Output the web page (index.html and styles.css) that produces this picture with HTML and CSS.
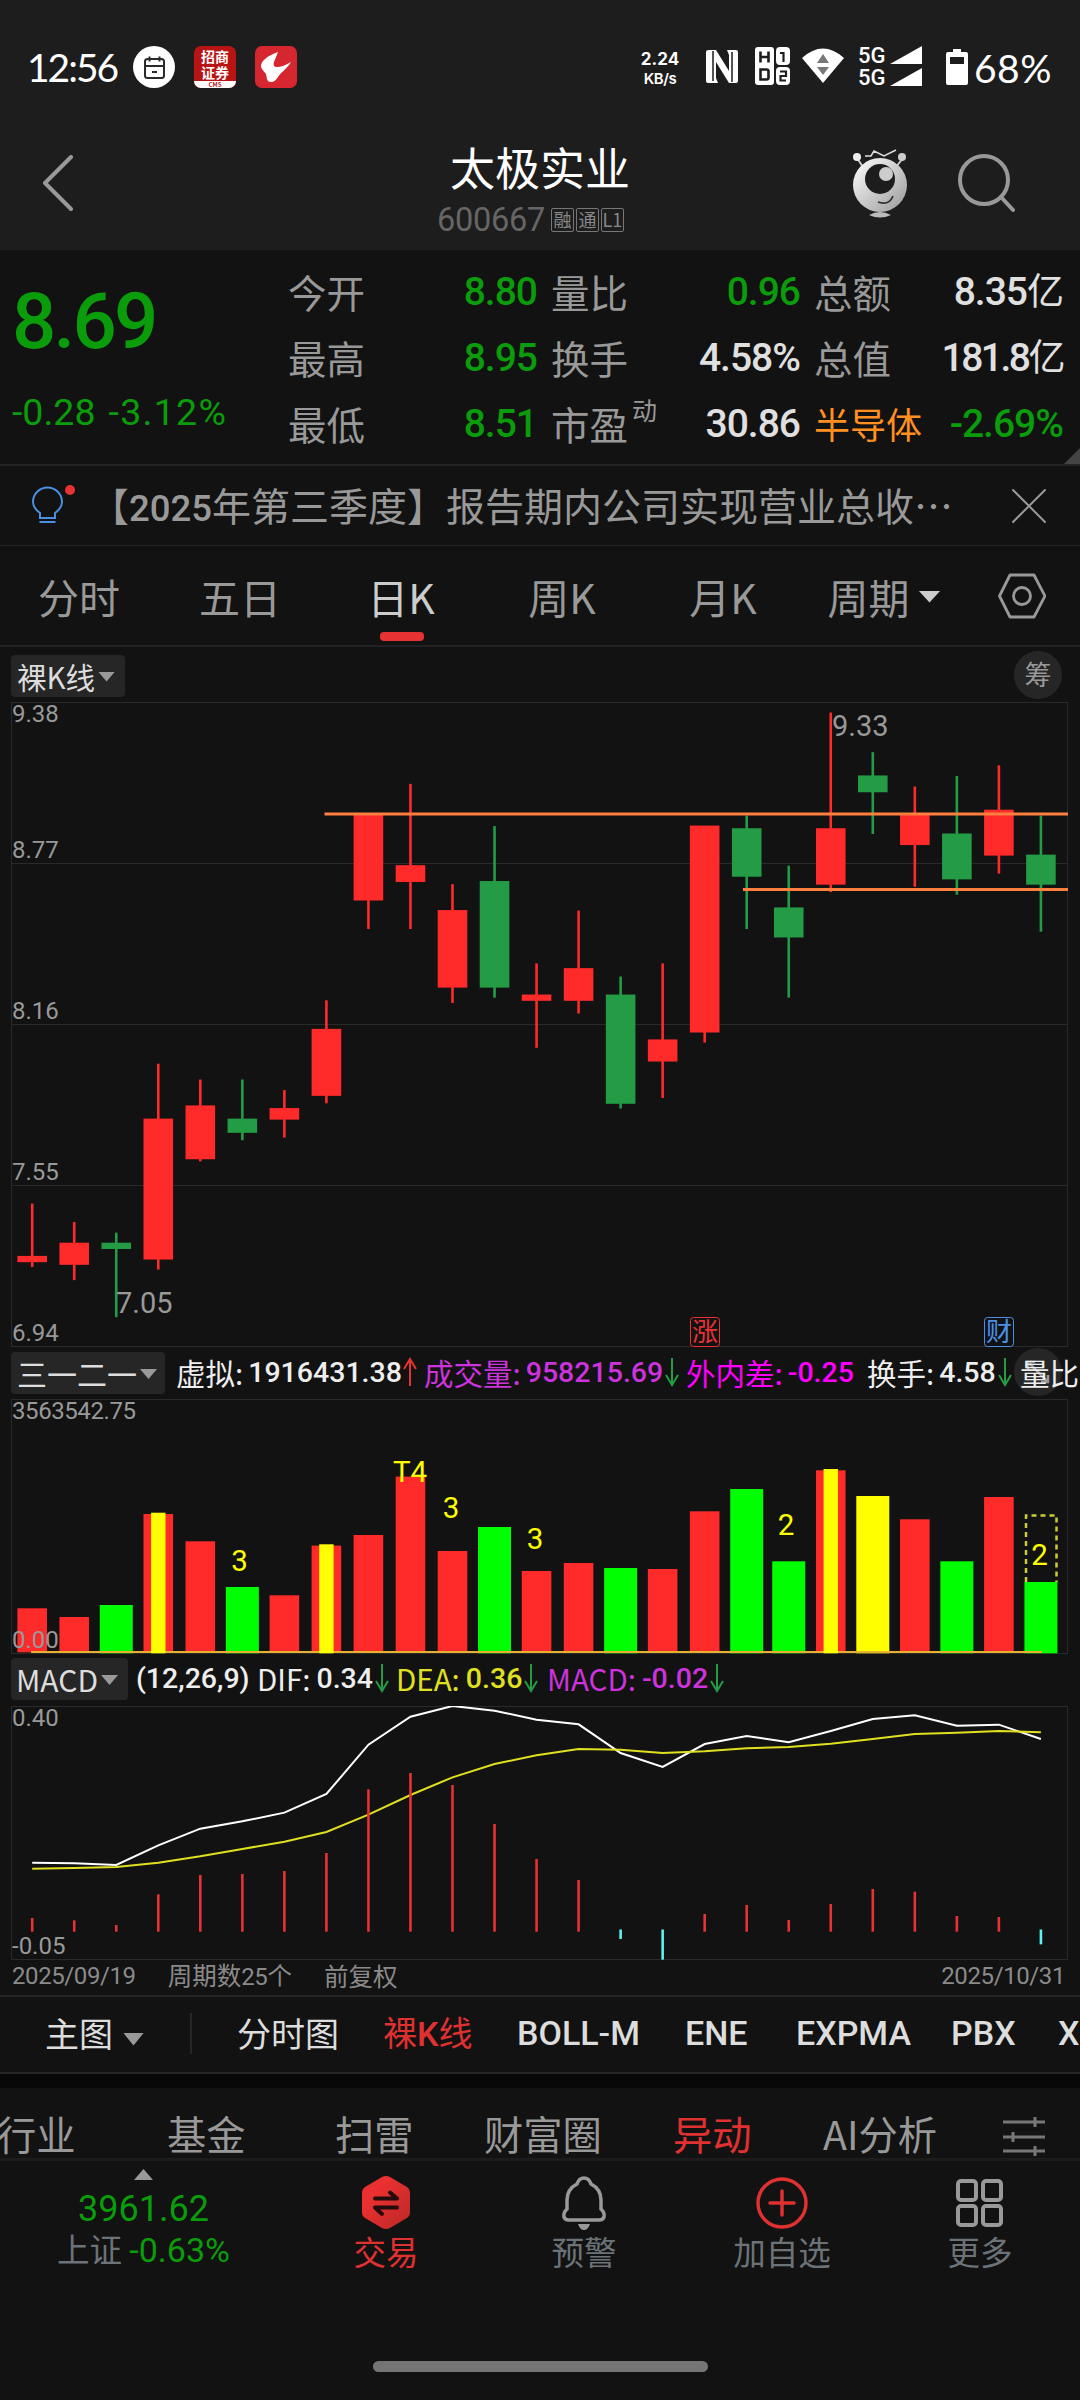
FILE: index.html
```html
<!DOCTYPE html>
<html lang="zh-CN">
<head>
    <meta charset="UTF-8">
    <meta name="viewport" content="width=device-width, initial-scale=1.0">
    <title>太极实业 600667</title>
    <link rel="stylesheet" href="styles.css">
</head>
<body>
    <!-- Status bar -->
    <div class="status-bar">
        <span class="clock">12:56</span>
        <svg class="app-icon" width="42" height="42" viewBox="0 0 42 42">
            <circle cx="21" cy="21" r="21" fill="#fff"/>
            <g fill="none" stroke="#2a2a2a" stroke-width="2">
                <rect x="12" y="13" width="19" height="19" rx="2.5"/>
                <path d="M12 20h19M16.500 10.500v5M26.500 10.500v5M19 26h5"/>
            </g>
        </svg>
        <div class="app-icon cms-icon">
            <div class="cms-text">招商<br>证券</div>
            <div class="cms-foot">CMS</div>
        </div>
        <svg class="app-icon" width="42" height="42" viewBox="0 0 42 42">
            <rect width="42" height="42" rx="7" fill="#d6262f"/>
            <path d="M23 6C12 10 6 15 6 20c0 3 3 5 5 8 1 5 1 8 5 8 3 0 5-2 7-5 3-5 9-8 13-15-5 3-10 5-14 5-3 0-4-2-3-5z" fill="#fff"/>
        </svg>
        <div class="net-speed">
            <span>2.24</span>
            <span>KB/s</span>
        </div>
        <svg class="status-icons" width="218" height="42" viewBox="0 0 218 42">
            <!-- nfc -->
            <path d="M3 4h7l13 21V9l-2-5h9q2 0 2 2v29q0 2-2 2h-7L10 16v16l2 5H3q-3 0-3-2V6q0-2 3-2z" fill="#fff"/>
            <path d="M7 5v30M26 6v30" stroke="#1d1d1d" stroke-width="1.5"/>
            <!-- hd 1/2 -->
            <g transform="translate(49 1)">
                <rect width="19" height="38" rx="3" fill="#fff"/>
                <path d="M5.500 4.500v11M13.500 4.500v11M5.500 10h8M5.500 22.500h6q2 0 2 2v6q0 2-2 2h-6z" fill="none" stroke="#1d1d1d" stroke-width="2.600"/>
                <rect x="21" width="14" height="18" rx="4" fill="#fff"/>
                <rect x="21" y="20" width="14" height="18" rx="4" fill="#fff"/>
                <path d="M25 6h3.500v9M25 24.500h6v4.500h-5.500v4.500H31" fill="none" stroke="#1d1d1d" stroke-width="2.200"/>
            </g>
            <!-- wifi -->
            <path d="M96 12Q117-7 138 12L117 37z" fill="#fff"/>
            <path d="M117 8l6 9h-12zM111 21h12l-6 8z" fill="#777"/>
            <text x="152" y="17" class="net-type">5G</text>
            <text x="152" y="39" class="net-type">5G</text>
            <path d="M216 0v18h-32zM216 22v18h-32z" fill="#fff"/>
        </svg>
        <svg class="battery-icon" width="22" height="36" viewBox="0 0 22 36">
            <path d="M7 0h8v3h5q2 0 2 2v29q0 2-2 2H2q-2 0-2-2V5q0-2 2-2h5z" fill="#fff"/>
            <rect x="4" y="8" width="14" height="7" fill="#1d1d1d"/>
        </svg>
        <span class="battery">68%</span>
    </div>

    <!-- Title bar -->
    <div class="title-bar">
        <svg class="back" width="32" height="56" viewBox="0 0 32 56">
            <path d="M29 2L3 28l26 26" fill="none" stroke="#999" stroke-width="4" stroke-linecap="round" stroke-linejoin="round"/>
        </svg>
        <div class="title">
            <div class="name">太极实业</div>
            <div class="code"><span class="num">600667</span><i>融</i><i>通</i><i>L1</i></div>
        </div>
        <svg class="robot" width="56" height="70" viewBox="0 0 56 70">
            <defs>
                <linearGradient id="silver" x1="0" y1="0" x2="1" y2="1">
                    <stop offset="0" stop-color="#fff"/>
                    <stop offset="1" stop-color="#999"/>
                </linearGradient>
            </defs>
            <path d="M5 9l6 9M51 9l-7 9" stroke="#ccc" stroke-width="2"/>
            <circle cx="5" cy="8" r="4" fill="#eee"/>
            <circle cx="50" cy="8" r="4" fill="#ccc"/>
            <path d="M13 7h6l3-5 10 5 12-6" fill="none" stroke="#ddd" stroke-width="1.500"/>
            <circle cx="28" cy="36" r="27" fill="url(#silver)"/>
            <circle cx="28" cy="30" r="15" fill="#1d1d1d"/>
            <circle cx="34" cy="25" r="7" fill="#ccc"/>
            <path d="M26 53q11 4 15-6" fill="none" stroke="#333" stroke-width="1.800"/>
            <path d="M17 66q11-6 22 0-11 5-22 0z" fill="#bbb"/>
        </svg>
        <svg class="search" width="58" height="60" viewBox="0 0 58 60">
            <circle cx="27" cy="27" r="24" fill="none" stroke="#999" stroke-width="4"/>
            <path d="M44 44l12 13" stroke="#999" stroke-width="4" stroke-linecap="round"/>
        </svg>
    </div>

    <!-- Quote -->
    <div class="quote">
        <div class="last num">
            <div class="price">8.69</div>
            <div class="change"><span>-0.28</span><span>-3.12%</span></div>
        </div>
        <div class="stats">
            <div class="stat"><span>今开</span><b class="down">8.80</b></div>
            <div class="stat"><span>量比</span><b class="down">0.96</b></div>
            <div class="stat"><span>总额</span><b>8.35<em>亿</em></b></div>
            <div class="stat"><span>最高</span><b class="down">8.95</b></div>
            <div class="stat"><span>换手</span><b>4.58%</b></div>
            <div class="stat"><span>总值</span><b class="long">181.8<em>亿</em></b></div>
            <div class="stat"><span>最低</span><b class="down">8.51</b></div>
            <div class="stat"><span>市盈<sup>动</sup></span><b>30.86</b></div>
            <div class="stat"><span class="sector">半导体</span><b class="down">-2.69%</b></div>
        </div>
        <div class="corner"></div>
    </div>

    <!-- Notice -->
    <div class="notice">
        <svg class="bulb" width="44" height="42" viewBox="0 0 44 42">
            <path d="M8 33v-5Q1 23 1 17a14.500 14.500 0 0 1 29 0q0 6-7 11v5zM7.500 37h16" fill="none" stroke="#4a90e2" stroke-width="2"/>
            <circle cx="38" cy="5" r="5" fill="#e63232"/>
        </svg>
        <span class="notice-text">【<span class="num">2025</span>年第三季度】报告期内公司实现营业总收<span class="dots">⋯</span></span>
        <svg class="close" width="36" height="36" viewBox="0 0 36 36">
            <path d="M2 2l32 32M34 2L2 34" stroke="#999" stroke-width="2" stroke-linecap="round"/>
        </svg>
    </div>

    <!-- Period tabs -->
    <div class="tabs">
        <span>分时</span>
        <span>五日</span>
        <span class="active">日K</span>
        <span>周K</span>
        <span>月K</span>
        <span>周期<i class="tri light"></i></span>
        <svg width="48" height="46" viewBox="0 0 48 46">
            <path d="M12 2h24l11 21-11 21H12L1.500 23z" fill="none" stroke="#999" stroke-width="2.800" stroke-linejoin="round"/>
            <circle cx="24" cy="23" r="8.500" fill="none" stroke="#999" stroke-width="2.800"/>
        </svg>
    </div>

    <!-- K line -->
    <div class="chart-head k-head">
        <span class="picker">裸K线<i class="tri"></i></span>
        <span class="round">筹</span>
    </div>
    <svg id="kline" class="chart" width="1080" height="645" viewBox="0 702 1080 645"></svg>

    <!-- Volume -->
    <div class="chart-head vol-head">
        <span class="picker">三一二一<i class="tri"></i></span>
        <div class="vol-values">
            <span>虚拟:<b>1916431.38</b><svg class="arrow up" width="14" height="30" viewBox="0 0 14 30"><path d="M7 29V2M1 12l6-10 6 10"/></svg></span>
            <span class="purple">成交量:<b>958215.69</b><svg class="arrow" width="14" height="30" viewBox="0 0 14 30"><path d="M7 1v27M1 18l6 10 6-10"/></svg></span>
            <span class="magenta">外内差:<b>-0.25</b></span>
            <span>换手:<b>4.58</b><svg class="arrow" width="14" height="30" viewBox="0 0 14 30"><path d="M7 1v27M1 18l6 10 6-10"/></svg></span>
            <span>量比</span>
        </div>
        <span class="round expand">
            <svg width="26" height="26" viewBox="0 0 26 26"><path d="M3 3l20 20M3 10V3h7M23 16v7h-7" fill="none" stroke="#999" stroke-width="2.500"/></svg>
        </span>
    </div>
    <svg id="volume" class="chart" width="1080" height="256" viewBox="0 1399 1080 256"></svg>

    <!-- MACD -->
    <div class="chart-head macd-head">
        <span class="picker">MACD<i class="tri"></i></span>
        <div class="macd-values">
            <b>(12,26,9)</b>
            <span>DIF:<b>0.34</b><svg class="arrow" width="14" height="30" viewBox="0 0 14 30"><path d="M7 1v27M1 18l6 10 6-10"/></svg></span>
            <span class="yellow">DEA:<b>0.36</b><svg class="arrow" width="14" height="30" viewBox="0 0 14 30"><path d="M7 1v27M1 18l6 10 6-10"/></svg></span>
            <span class="purple">MACD:<b>-0.02</b><svg class="arrow" width="14" height="30" viewBox="0 0 14 30"><path d="M7 1v27M1 18l6 10 6-10"/></svg></span>
        </div>
    </div>
    <svg id="macd" class="chart" width="1080" height="255" viewBox="0 1706 1080 255"></svg>
    <div class="date-row">
        <span class="num">2025/09/19</span>
        <span>周期数<span class="num">25</span>个</span>
        <span>前复权</span>
        <span class="num">2025/10/31</span>
    </div>

    <!-- Main chart indicators -->
    <div class="indicators">
        <span class="main-pick">主图<i class="tri"></i></span>
        <span>分时图</span>
        <span class="active">裸<b>K</b>线</span>
        <b>BOLL-M</b>
        <b>ENE</b>
        <b>EXPMA</b>
        <b>PBX</b>
        <b>XS</b>
    </div>

    <div class="sections">
        <span>行业</span>
        <span>基金</span>
        <span>扫雷</span>
        <span>财富圈</span>
        <span class="active">异动</span>
        <span>AI分析</span>
        <svg width="44" height="40" viewBox="0 0 44 40">
            <path d="M1 5h42M1 20h42M1 34h42M33 0v10M11 15v10M33 29v10" stroke="#777" stroke-width="3" fill="none"/>
        </svg>
    </div>

    <!-- Bottom bar -->
    <div class="bottom-bar">
        <div class="index">
            <i class="tri-up"></i>
            <div class="index-value num">3961.62</div>
            <div class="index-name">上证 <span class="num">-0.63%</span></div>
        </div>
        <div class="item active">
            <svg width="52" height="54" viewBox="0 0 52 54">
                <defs>
                    <linearGradient id="trade" x1="0" y1="0" x2="1" y2="1">
                        <stop offset="0.3" stop-color="#ea3030"/>
                        <stop offset="1" stop-color="#b92828"/>
                    </linearGradient>
                </defs>
                <path d="M26 0q2 0 4 1l17 10q3 2 3 5v21q0 3-3 5L30 52q-4 2-8 0L5 42q-3-2-3-5V16q0-3 3-5L22 1q2-1 4-1z" fill="url(#trade)"/>
                <path d="M15 22.500h22l-7-6M37 31.500H15l7 6.500" fill="none" stroke="#250c0c" stroke-width="4" stroke-linecap="round" stroke-linejoin="round"/>
            </svg>
            <span>交易</span>
        </div>
        <div class="item">
            <svg width="52" height="54" viewBox="0 0 52 54">
                <path d="M26 2c-4 0-6 3-7 6-6 3-10 9-10 16v9c-5 5-4 11 2 11h30c6 0 7-6 2-11v-9c0-7-4-13-10-16-1-3-3-6-7-6z" fill="none" stroke="#999" stroke-width="3.500"/>
                <path d="M20 48h12q-2 6-6 6t-6-6z" fill="#999"/>
            </svg>
            <span>预警</span>
        </div>
        <div class="item">
            <svg width="52" height="54" viewBox="0 0 52 54">
                <circle cx="26" cy="27" r="24" fill="none" stroke="#e03131" stroke-width="3.500"/>
                <path d="M26 15v24M14 27h24" stroke="#e03131" stroke-width="3.500" stroke-linecap="round"/>
            </svg>
            <span>加自选</span>
        </div>
        <div class="item">
            <svg width="52" height="54" viewBox="0 0 52 54">
                <g fill="none" stroke="#999" stroke-width="4">
                    <rect x="4" y="5" width="18" height="19" rx="3"/>
                    <rect x="29" y="5" width="18" height="19" rx="3"/>
                    <rect x="4" y="30" width="18" height="19" rx="3"/>
                    <rect x="29" y="30" width="18" height="19" rx="3"/>
                </g>
            </svg>
            <span>更多</span>
        </div>
    </div>
    <div class="home-bar"></div>

    <script src="script.js"></script>
</body>
</html>
```
FILE: styles.css
```css
* {
    box-sizing: border-box;
}

body {
    margin: 0;
    width: 1080px;
    height: 2400px;
    overflow: hidden;
    background-color: #121212;
    color: #999;
    font-family: "Noto Sans CJK SC", sans-serif;
    font-weight: 400;
}

svg {
    display: block;
    flex-shrink: 0;
}

i, em {
    font-style: normal;
}

b {
    font-weight: 500;
}

.num, b {
    font-family: Roboto, "Noto Sans CJK SC", sans-serif;
}

.down {
    color: #0a9c0a;
}

/* Status bar */
.status-bar {
    display: flex;
    align-items: center;
    height: 134px;
    padding-left: 27px;
    background-color: #1d1d1d;
    color: #fff;
}

.clock, .battery {
    font-family: Lato, sans-serif;
    font-size: 39px;
    letter-spacing: -2px;
}

.clock {
    width: 106px;
}

.battery {
    margin-left: 6px;
    margin-top: 2px;
    letter-spacing: 0.500px;
}

.battery-icon {
    margin-left: 22px;
}

.app-icon {
    margin-right: 19px;
    flex-shrink: 0;
}

.cms-icon {
    width: 42px;
    height: 42px;
    border-radius: 7px;
    overflow: hidden;
    background-color: #b81414;
    text-align: center;
}

.cms-text {
    height: 35px;
    padding-top: 2px;
    font-size: 14px;
    line-height: 16px;
    font-weight: 700;
}

.cms-foot {
    height: 7px;
    background-color: #fff;
    color: #b81414;
    font-size: 6px;
    line-height: 7px;
    font-weight: 700;
}

.net-speed {
    display: flex;
    flex-direction: column;
    align-items: center;
    width: 48px;
    margin-left: 320px;
    margin-right: 22px;
    margin-top: 4px;
    font-family: Inter, sans-serif;
    font-size: 17px;
    line-height: 20px;
    font-weight: 700;
}

.net-speed span + span {
    font-size: 15px;
    font-weight: 600;
    letter-spacing: -0.500px;
}

.net-type {
    font-family: Roboto, sans-serif;
    font-size: 22px;
    font-weight: 500;
    fill: #fff;
}

/* Title bar */
.title-bar {
    display: flex;
    align-items: center;
    height: 116px;
    padding-left: 42px;
    background-color: #1d1d1d;
}

.back {
    margin-top: -19px;
}

.title {
    width: 370px;
    margin-left: 281px;
    text-align: center;
}

.name {
    margin-top: -1px;
    color: #fff;
    font-size: 45px;
    line-height: 54px;
}

.code {
    display: flex;
    align-items: center;
    justify-content: center;
    gap: 2px;
    height: 46px;
    margin-top: 3px;
    margin-right: 19px;
    color: #666;
    font-size: 32.500px;
}

.code .num {
    margin-right: 4px;
    letter-spacing: -0.300px;
}

.code i {
    width: 23px;
    height: 24px;
    border: 1px solid #777;
    border-radius: 2px;
    color: #888;
    font-size: 18px;
    line-height: 21px;
    text-align: center;
}

.robot {
    margin: -17px 0 0 127px;
}

.search {
    margin: -19px 0 0 49px;
}

/* Quote */
.quote {
    position: relative;
    display: flex;
    height: 216px;
    border-bottom: 2px solid #222;
}

.last {
    width: 288px;
    padding-left: 12px;
    color: #0a9c0a;
    font-weight: 500;
}

.price {
    height: 134px;
    padding-top: 25px;
    font-size: 78px;
    line-height: 94px;
    letter-spacing: -2.800px;
}

.change {
    display: flex;
    gap: 13px;
    font-size: 37.500px;
    line-height: 56px;
    font-weight: 400;
}

.change span + span {
    letter-spacing: 1.300px;
}

.stats {
    display: grid;
    grid-template-columns: repeat(3, 247px);
    grid-auto-rows: 66px;
    column-gap: 16px;
    padding-top: 9px;
}

.stat {
    display: flex;
    align-items: center;
    justify-content: space-between;
    font-size: 38.500px;
    line-height: 61px;
    white-space: nowrap;
}

.stat > span {
    margin-top: -2px;
}

.stat b {
    color: #e0e0e0;
    font-size: 39px;
    line-height: 66px;
    letter-spacing: -1px;
    margin-right: -2px;
}

.stat b.down {
    color: #0a9c0a;
}

.stat em {
    font-size: 37px;
    font-weight: 400;
}

.stat .long {
    letter-spacing: -2.500px;
}

.stat sup {
    margin-left: 4px;
    font-size: 25px;
    line-height: 0;
    vertical-align: 20px;
}

.stat .sector {
    color: #ff9020;
    font-size: 36px;
}

.corner {
    position: absolute;
    right: 0;
    bottom: 0;
    border: 8px solid #444;
    border-top-color: transparent;
    border-left-color: transparent;
}

/* Notice */
.notice {
    display: flex;
    align-items: center;
    height: 80px;
    padding-left: 32px;
    border-bottom: 1px solid #262626;
}

.notice-text {
    width: 921px;
    margin-left: 14px;
    margin-top: 1px;
    font-size: 39px;
    line-height: 76px;
    white-space: nowrap;
}

.notice-text .num {
    font-size: 36.500px;
    font-weight: 500;
}

/* Period tabs */
.tabs {
    display: grid;
    grid-template-columns: repeat(6, 161px) 114px;
    align-items: center;
    height: 101px;
    border-bottom: 2px solid #222;
    font-size: 41px;
}

.tabs span {
    display: flex;
    position: relative;
    align-items: center;
    justify-content: center;
    padding-right: 3px;
    line-height: 101px;
}

.tabs svg {
    margin-left: 32px;
    margin-top: -2px;
}

.tabs .active {
    color: #ccc;
}

.tabs .active::after {
    content: "";
    position: absolute;
    left: 58px;
    bottom: 6px;
    width: 44px;
    height: 9px;
    border-radius: 4px;
    background-color: #e63232;
}

.tri {
    width: 17px;
    height: 10px;
    margin-left: 3px;
    background-color: #999;
    clip-path: polygon(0 0, 100% 0, 50% 100%);
}

.tri.light {
    width: 22px;
    height: 12px;
    margin-left: 9px;
    background-color: #ccc;
}

/* Chart headers */
.chart-head {
    display: flex;
    position: relative;
    align-items: center;
    padding-left: 11px;
    white-space: nowrap;
}

.picker {
    display: flex;
    align-items: center;
    flex-shrink: 0;
    height: 42px;
    padding-left: 6px;
    border-radius: 4px;
    background-color: #262626;
    color: #ddd;
    line-height: 38px;
}

.picker .tri {
    margin-top: 2px;
}

.round {
    width: 48px;
    height: 48px;
    border-radius: 50%;
    background-color: #262626;
    font-size: 27px;
    line-height: 46px;
    text-align: center;
}

.k-head {
    height: 55px;
    justify-content: space-between;
    padding-right: 18px;
}

.k-head .picker {
    width: 114px;
    margin-top: 2px;
    font-size: 29.500px;
}

.vol-head {
    height: 52px;
}

.vol-head .picker {
    width: 154px;
    font-size: 30px;
}

.macd-head {
    height: 48px;
    margin-bottom: 3px;
}

.macd-head .picker {
    width: 117px;
    padding-left: 5px;
    font-size: 30px;
    line-height: 36px;
}

.vol-values, .macd-values {
    display: grid;
    position: relative;
    z-index: 1;
    align-items: center;
    margin-top: -3px;
    color: #eee;
    font-size: 29.500px;
}

.vol-values {
    grid-template-columns: 248px 262px 181px 153px 60px;
    margin-left: 11px;
}

.macd-values {
    grid-template-columns: 121px 139px 151px 180px;
    margin-left: 8px;
    font-size: 29.500px;
}

.vol-values span, .macd-values span {
    display: flex;
    align-items: center;
}

.vol-values b, .macd-values b {
    margin-top: 2px;
    font-size: 28.500px;
}

.vol-values b {
    margin-left: 5px;
}

.macd-values span b {
    margin-left: 6px;
}

.purple {
    color: #cc33dd;
}

.magenta {
    color: #f0f;
}

.yellow {
    color: #e0e020;
}

.arrow {
    margin-left: 2px;
    fill: none;
    stroke: #239c45;
    stroke-width: 2;
}

.arrow.up {
    margin-left: 1px;
    stroke: #e63232;
}

.expand {
    position: absolute;
    top: 1px;
    left: 1014px;
    padding: 11px;
}

/* Charts */
.chart text {
    font-family: Roboto, "Noto Sans CJK SC", sans-serif;
}

.axis {
    fill: #999;
    font-size: 24px;
}

.extreme {
    fill: #999;
    font-size: 29px;
}

.chart .signal {
    fill: #ff0;
    font-size: 29.500px;
    text-anchor: middle;
}

.mark {
    font-size: 26px;
    text-anchor: middle;
}

.date-row {
    display: flex;
    align-items: center;
    height: 36px;
    padding: 0 15px 4px 12px;
    border-bottom: 2px solid #262626;
    font-size: 24.500px;
    line-height: 30px;
    color: #8a8a8a;
}

.date-row > span + span {
    margin-left: 32px;
}

.date-row > span:last-child {
    margin-left: auto;
}

.date-row .num {
    font-size: 24px;
    letter-spacing: -0.400px;
}

/* Indicators */
.indicators {
    display: grid;
    grid-template-columns: 192px 191px 134px 168px 111px 155px 107px 60px;
    align-items: center;
    height: 77px;
    border-bottom: 2px solid #262626;
    color: #ddd;
    font-size: 34px;
    line-height: 68px;
    white-space: nowrap;
}

.indicators > * {
    margin-top: -3px;
}

.indicators b {
    font-size: 34px;
}

.indicators .main-pick {
    display: flex;
    align-items: center;
    height: 41px;
    padding-left: 45px;
    border-right: 2px solid #262626;
}

.indicators .main-pick + span {
    padding-left: 45px;
}

.main-pick .tri {
    width: 21px;
    height: 13px;
    margin: 12px 0 0 10px;
}

.active {
    color: #e03131;
}

.sections {
    display: grid;
    grid-template-columns: 167px 168px 149px 189px 150px 179px 60px;
    align-items: center;
    height: 87px;
    border-top: 14px solid #080808;
    border-bottom: 3px solid #1c1c1c;
    font-size: 39.300px;
    line-height: 40px;
    white-space: nowrap;
}

.sections span:first-child {
    margin-left: -3px;
}

.sections span {
    margin-top: 20px;
}

.sections svg {
    margin-top: 28px;
}

/* Bottom bar */
.bottom-bar {
    display: grid;
    grid-template-columns: 287px repeat(4, 198px);
    height: 200px;
    padding-top: 15px;
    color: #6b7378;
    font-size: 32.500px;
    text-align: center;
}

.item {
    display: flex;
    flex-direction: column;
    align-items: center;
    line-height: 42px;
}

.item.active {
    color: #e03131;
}

.tri-up {
    display: block;
    width: 19px;
    height: 11px;
    margin: -7px auto 0;
    background-color: #999;
    clip-path: polygon(0 100%, 100% 100%, 50% 0);
}

.index-value {
    margin-top: 8px;
    color: #0a9c0a;
    font-size: 36px;
    line-height: 42px;
}

.index-name {
    margin-top: -3px;
    line-height: 42px;
    white-space: nowrap;
}

.index-name .num {
    color: #0a9c0a;
    font-size: 34px;
}

.home-bar {
    width: 335px;
    height: 11px;
    margin: 0 auto;
    border-radius: 6px;
    background-color: #757575;
}
```
FILE: script.js
```js
const RED = "#ff2a2a";
const GREEN = "#239c45";
const GRID = "#2a2a2a";

// x of the middle of day i
const cx = i => 32.2 + 42.03 * i;

// high, body top, body bottom, low, 1 = up day
const days = [
    [7.48, 7.28, 7.26, 7.24, 1], [7.41, 7.33, 7.25, 7.19, 1], [7.37, 7.33, 7.31, 7.05, 0],
    [8.01, 7.80, 7.27, 7.23, 1], [7.95, 7.85, 7.65, 7.64, 1], [7.95, 7.80, 7.75, 7.72, 0],
    [7.91, 7.84, 7.80, 7.73, 1], [8.25, 8.14, 7.89, 7.86, 1], [8.95, 8.95, 8.63, 8.52, 1],
    [9.07, 8.76, 8.70, 8.52, 1], [8.69, 8.59, 8.30, 8.24, 1], [8.91, 8.70, 8.30, 8.26, 0],
    [8.39, 8.27, 8.25, 8.07, 1], [8.59, 8.37, 8.25, 8.20, 1], [8.34, 8.27, 7.86, 7.84, 0],
    [8.39, 8.10, 8.02, 7.88, 1], [8.91, 8.91, 8.13, 8.09, 1], [8.95, 8.90, 8.72, 8.52, 0],
    [8.76, 8.60, 8.49, 8.26, 0], [9.34, 8.90, 8.69, 8.66, 1], [9.19, 9.10, 9.04, 8.88, 0],
    [9.06, 8.95, 8.84, 8.68, 1], [9.10, 8.88, 8.71, 8.65, 0], [9.14, 8.97, 8.80, 8.73, 1],
    [8.95, 8.80, 8.69, 8.51, 0]
];

function rect(x, y, w, h, fill) {
    return `<rect x="${x}" y="${y}" width="${w}" height="${h}" fill="${fill}"/>`;
}

function line(x1, y1, x2, y2, color, width) {
    return `<line x1="${x1}" y1="${y1}" x2="${x2}" y2="${y2}" stroke="${color}" stroke-width="${width}"/>`;
}

function text(x, y, cls, str, extra = "") {
    return `<text x="${x}" y="${y}" class="${cls}" ${extra}>${str}</text>`;
}

function frame(top, bottom) {
    return `<rect x="11.5" y="${top}" width="1056" height="${bottom - top}" fill="none" stroke="${GRID}"/>`;
}

function drawKline() {
    const y = p => 702 + (9.38 - p) * 264;
    let out = frame(702.5, 1346.5);
    [863.5, 1024.5, 1185.5].forEach(v => out += line(11, v, 1068, v, GRID, 1));

    days.forEach(([high, top, bottom, low, up], i) => {
        const color = up ? RED : GREEN;
        out += line(cx(i), y(high), cx(i), y(low), color, 2.6);
        out += rect(cx(i) - 14.8, y(top) - 0.5, 29.6, y(bottom) - y(top) + 1, color);
    });

    // pressure and support lines
    out += line(324.5, 814, 1068, 814, "#ff7f3f", 3);
    out += line(743, 889.5, 1068, 889.5, "#ff7f3f", 3);

    [["9.38", 722], ["8.77", 858], ["8.16", 1019], ["7.55", 1180], ["6.94", 1341]]
        .forEach(([s, v]) => out += text(12, v, "axis", s));
    out += text(116, 1313, "extreme", "7.05");
    out += text(832, 735.5, "extreme", "9.33");

    [[705, "涨", "#e63232"], [999, "财", "#4a90e2"]].forEach(([x, s, color]) => {
        out += `<rect x="${x - 14.5}" y="1317.5" width="29" height="29" rx="3" fill="none" stroke="${color}"/>`;
        out += text(x, 1341, "mark", s, `fill="${color}"`);
    });
    document.getElementById("kline").innerHTML = out;
}

function drawVolume() {
    const base = 1653.3;
    const heights = [45, 36.3, 48.3, 139.3, 112, 66.3, 58, 107.7, 118.3, 176.7, 102.3, 126.3, 82.3,
        90.3, 85.3, 84.3, 142, 164.3, 92, 183, 157.3, 134, 92, 156.3, 71.3];
    const doubled = [3, 7, 19];
    let out = frame(1399.5, 1653.5);

    heights.forEach((h, i) => {
        if (i === 20) {
            out += rect(cx(i) - 16.5, base - h, 33, h, "#ff0");
        } else if (days[i][4]) {
            out += rect(cx(i) - 14.8, base - h, 29.6, h - 1, RED);
        } else {
            out += rect(cx(i) - 16.5, base - h, 33, h, "#0f0");
        }
    });
    out += line(31, 1652, 1042, 1652, "#e8b030", 2);
    doubled.forEach(i => out += rect(cx(i) - 7.2, base - heights[i] - 1.3, 14.4, heights[i] + 1.3, "#ff0"));

    // estimated volume for the running day
    out += `<path d="M1026 1582V1515.500H1056.500V1582" fill="none" stroke="#cccc33" stroke-width="2.500" stroke-dasharray="5 4"/>`;

    out += text(12, 1419, "axis", "3563542.75", 'textLength="124"');
    out += text(12, 1647.5, "axis", "0.00");
    [[239.5, 1570.5, "3"], [410, 1482, "T4"], [451, 1517.5, "3"], [535, 1548.5, "3"], [786, 1535, "2"], [1039.5, 1565, "2"]]
        .forEach(([x, v, s]) => out += text(x, v, "signal", s));
    document.getElementById("volume").innerHTML = out;
}

function drawMacd() {
    const y = v => 1660 + v / 3;
    const dif = [608, 610, 615, 556, 506, 484, 458, 402, 254, 170, 138, 152, 179, 193, 279, 321, 252,
        228, 247, 213, 177, 166, 197, 194, 237];
    const dea = [626, 624, 621, 608, 589, 567, 545, 516, 464, 405, 352, 312, 286, 267, 269, 279, 274,
        265, 261, 251, 237, 222, 218, 213, 217];
    const bars = [774, 781, 795, 703, 645, 642, 633, 579, 388, 339, 375, 492, 597, 660, 837, 899, 762,
        735, 780, 732, 687, 695, 768, 771, 853];
    const points = list => list.map((v, i) => `${cx(i)},${y(v)}`).join(" ");
    let out = frame(1706.5, 1959.5);

    out += `<polyline points="${points(dif)}" fill="none" stroke="#fff" stroke-width="2"/>`;
    out += `<polyline points="${points(dea)}" fill="none" stroke="#e0e020" stroke-width="2"/>`;
    bars.forEach((v, i) => {
        out += v > 815
            ? line(cx(i), 1929.5, cx(i), y(v), "#5ff0f0", 2.6)
            : line(cx(i), y(v), cx(i), 1931.7, "#e63232", 2.6);
    });
    out += text(12, 1726, "axis", "0.40");
    out += text(12, 1954, "axis", "-0.05");
    document.getElementById("macd").innerHTML = out;
}

drawKline();
drawVolume();
drawMacd();
```
